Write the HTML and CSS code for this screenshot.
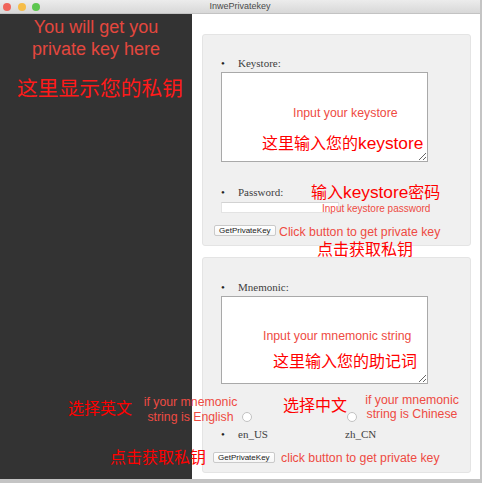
FILE: index.html
```html
<!DOCTYPE html>
<html lang="zh">
<head>
<meta charset="utf-8">
<title>InwePrivatekey</title>
<link rel="stylesheet" href="styles.css">
</head>
<body>
<div class="window">
  <header class="titlebar">
    <div class="lights"><span class="light red"></span><span class="light yellow"></span><span class="light green"></span></div>
    <div class="title">InwePrivatekey</div>
    <div></div>
  </header>
  <div class="content">
    <aside class="output">
      <p class="lead">You will get you<br>private key here</p>
      <p class="lead-cn">这里显示您的私钥</p>
    </aside>
    <main class="forms">
      <section class="box box-keystore">
        <ul class="field-list"><li>Keystore:</li></ul>
        <textarea class="area"></textarea>
        <ul class="field-list pw-list"><li>Password:</li></ul>
        <input type="password" class="pw-input">
        <button class="btn btn-ks">GetPrivateKey</button>
      </section>
      <section class="box box-mnemonic">
        <ul class="field-list mn-list"><li>Mnemonic:</li></ul>
        <textarea class="area area-mn"></textarea>
        <div class="radios">
          <input type="radio" name="lang" class="radio">
          <input type="radio" name="lang" class="radio">
        </div>
        <ul class="field-list langs"><li><span class="lang-en">en_US</span><span>zh_CN</span></li></ul>
        <button class="btn btn-mn">GetPrivateKey</button>
      </section>
    </main>
  </div>

  <p class="note note-en n-ks-hint">Input your keystore</p>
  <p class="note note-cn n-ks-cn">这里输入您的<span class="latin">keystore</span></p>
  <p class="note note-cn n-pw-cn">输入<span class="latin">keystore</span>密码</p>
  <p class="note note-en n-pw-hint">Input keystore password</p>
  <p class="note note-en n-btn1">Click button to get private key</p>
  <p class="note note-cn n-btn1-cn">点击获取私钥</p>
  <p class="note note-en n-mn-hint">Input your mnemonic string</p>
  <p class="note note-cn n-mn-cn">这里输入您的助记词</p>
  <p class="note note-cn n-en-cn">选择英文</p>
  <p class="note note-en n-en-hint">if your mnemonic<br>string is English</p>
  <p class="note note-cn n-zh-cn">选择中文</p>
  <p class="note note-en n-zh-hint">if your mnemonic<br>string is Chinese</p>
  <p class="note note-cn n-btn2-cn">点击获取私钥</p>
  <p class="note note-en n-btn2">click button to get private key</p>
</div>
</body>
</html>
```

FILE: styles.css
```css
* { box-sizing: border-box; }

html, body {
  margin: 0;
  background: #c4c4c4;
}

body {
  width: 482px;
  height: 483px;
  overflow: hidden;
  font-family: "Liberation Sans", "Noto Sans CJK SC", sans-serif;
}

.window {
  position: relative;
  width: 480px;
  height: 479px;
  display: flex;
  flex-direction: column;
  background: #fff;
}

.titlebar {
  height: 14px;
  flex: none;
  display: grid;
  grid-template-columns: 1fr auto 1fr;
  align-items: center;
  background: linear-gradient(#ececec, #d8d8d8);
  border-bottom: 1px solid #c3c3c3;
}

.lights {
  display: flex;
  gap: 6.5px;
  padding-left: 3px;
}

.light {
  width: 8px;
  height: 8px;
  border-radius: 50%;
}
.red { background: #f0655b; }
.yellow { background: #f6bd48; }
.green { background: #5cc64f; }

.title {
  font-size: 9px;
  line-height: 13px;
  color: #4b4b4b;
}

.content {
  flex: 1;
  display: flex;
}

.output {
  width: 192px;
  flex: none;
  background: #333333;
  padding-top: 2px;
}

.lead {
  margin: 0;
  text-align: center;
  font-size: 18px;
  line-height: 22px;
  color: #e4473e;
}

.lead-cn {
  margin: 17px 0 0 17px;
  font-size: 20.75px;
  line-height: 24px;
  color: #ff1a1a;
  white-space: nowrap;
}

.forms {
  flex: 1;
  display: flex;
  flex-direction: column;
  gap: 11px;
  padding: 20px 9px 0 10px;
}

.box {
  background: #f0f0f0;
  border: 1px solid #e4e4e4;
  border-radius: 3px;
  padding-left: 18px;
}
.box-keystore { height: 212px; }
.box-mnemonic { height: 216px; }

.field-list {
  margin: 22px 0 2px;
  padding-left: 17px;
  font-family: "Liberation Serif", serif;
  font-size: 11px;
  line-height: 13px;
  color: #3e3e3e;
}
.field-list li::marker {
  content: "•\00a0\00a0\00a0\00a0\2009";
  color: #222;
}
.mn-list { margin-top: 23px; }
.pw-list { margin-top: 24px; margin-bottom: 3px; }
.langs { margin: 6px 0 0; }

.area {
  display: block;
  width: 207px;
  height: 90px;
  margin: 0;
  padding: 2px;
  border: 1px solid #a9a9a9;
  background: #fff;
}
.area-mn { height: 88px; }

.pw-input {
  display: block;
  width: 118px;
  height: 11px;
  margin: 0;
  padding: 0;
  border: 1px solid #e3e3e3;
  border-top-color: #d2d2d2;
  background: #fff;
}

.btn {
  display: block;
  height: 11px;
  margin: 0;
  padding: 0 4px;
  border: 1px solid #cacaca;
  border-radius: 2px;
  background: linear-gradient(#ffffff, #f6f6f6);
  font-family: "Liberation Sans", sans-serif;
  font-size: 8px;
  line-height: 9px;
  color: #222;
}
.btn-ks { margin: 12px 0 0 -7px; }
.btn-mn { margin: 11px 0 0 -8px; }

.radios {
  display: flex;
  gap: 95px;
  margin-top: 28px;
  padding-left: 21px;
}

.radio {
  appearance: none;
  -webkit-appearance: none;
  width: 10px;
  height: 10px;
  margin: 0;
  border: 1px solid #c2c2c2;
  border-radius: 50%;
  background: #fff;
}

.lang-en {
  display: inline-block;
  width: 107px;
}

/* annotation overlay */
.note {
  position: absolute;
  margin: 0;
  line-height: 1;
  white-space: nowrap;
}
.note-en { color: #ee4b43; font-size: 12.3px; }
.note-cn { color: #ff0000; font-size: 16px; }
.latin { font-size: 17.3px; }

.n-ks-hint { left: 293px; top: 107px; }
.n-ks-cn { left: 262px; top: 135px; }
.n-pw-cn { left: 311px; top: 184px; }
.n-pw-hint { left: 322px; top: 204px; font-size: 10px; }
.n-btn1 { left: 279px; top: 226px; }
.n-btn1-cn { left: 317px; top: 242px; }
.n-mn-hint { left: 263px; top: 330px; }
.n-mn-cn { left: 273px; top: 354px; }
.n-en-cn { left: 68px; top: 401px; }
.n-en-hint { left: 140px; top: 395px; width: 101px; text-align: center; line-height: 15px; }
.n-zh-cn { left: 283px; top: 398px; }
.n-zh-hint { left: 361px; top: 393px; width: 102px; text-align: center; line-height: 14px; }
.n-btn2-cn { left: 110px; top: 450px; }
.n-btn2 { left: 281px; top: 452px; }
```
